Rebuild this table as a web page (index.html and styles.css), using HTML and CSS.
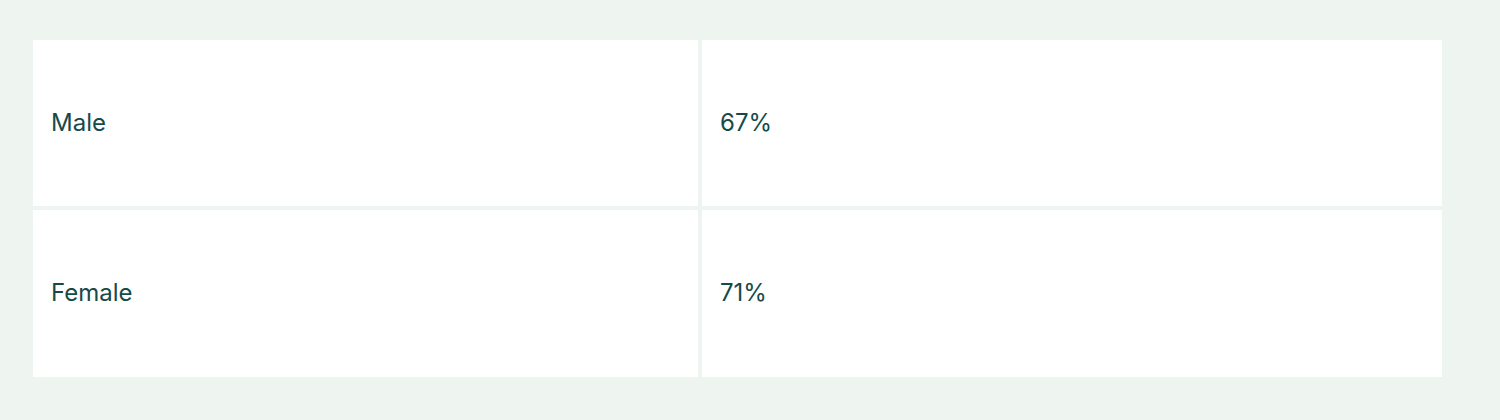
FILE: index.html
```html
<!DOCTYPE html>
<html lang="en">
<head>
<meta charset="utf-8">
<link rel="stylesheet" href="styles.css">
</head>
<body>
<div class="page">
  <div class="table">
    <div class="cell">Male</div>
    <div class="cell">67%</div>
    <div class="cell">Female</div>
    <div class="cell">71%</div>
  </div>
</div>
</body>
</html>
```

FILE: styles.css
```css
html, body {
  margin: 0;
  padding: 0;
  background: #eef5f1;
}
.page {
  padding: 40px 58px 43px 33px;
}
.table {
  display: grid;
  grid-template-columns: 665px 740px;
  grid-template-rows: 166px 167px;
  gap: 4px;
}
.cell {
  background: #ffffff;
  display: flex;
  align-items: center;
  padding: 0 18px 2px;
  font-family: Inter, "Liberation Sans", sans-serif;
  font-size: 24px;
  color: #164a4a;
}
```
